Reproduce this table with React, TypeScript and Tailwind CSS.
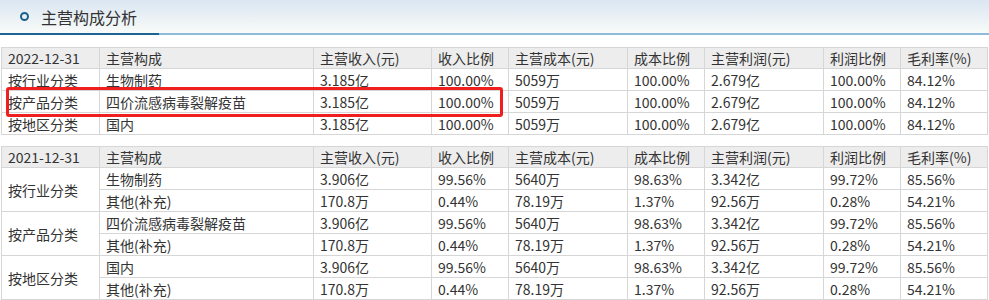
const COLS = [98, 214, 118, 77, 119, 77, 119, 77, 87];

const HEAD = [
  "主营构成",
  "主营收入(元)",
  "收入比例",
  "主营成本(元)",
  "成本比例",
  "主营利润(元)",
  "利润比例",
  "毛利率(%)",
];

type Group = { label: string; rows: string[][] };

const Y2022: Group[] = [
  { label: "按行业分类", rows: [["生物制药", "3.185亿", "100.00%", "5059万", "100.00%", "2.679亿", "100.00%", "84.12%"]] },
  { label: "按产品分类", rows: [["四价流感病毒裂解疫苗", "3.185亿", "100.00%", "5059万", "100.00%", "2.679亿", "100.00%", "84.12%"]] },
  { label: "按地区分类", rows: [["国内", "3.185亿", "100.00%", "5059万", "100.00%", "2.679亿", "100.00%", "84.12%"]] },
];

const OTHER = ["其他(补充)", "170.8万", "0.44%", "78.19万", "1.37%", "92.56万", "0.28%", "54.21%"];

const Y2021: Group[] = [
  { label: "按行业分类", rows: [["生物制药", "3.906亿", "99.56%", "5640万", "98.63%", "3.342亿", "99.72%", "85.56%"], OTHER] },
  { label: "按产品分类", rows: [["四价流感病毒裂解疫苗", "3.906亿", "99.56%", "5640万", "98.63%", "3.342亿", "99.72%", "85.56%"], OTHER] },
  { label: "按地区分类", rows: [["国内", "3.906亿", "99.56%", "5640万", "98.63%", "3.342亿", "99.72%", "85.56%"], OTHER] },
];

const cell = "border border-[#d6d6d6] px-[6px] py-0 text-left align-middle whitespace-nowrap";

function DataTable({ date, groups }: { date: string; groups: Group[] }) {
  return (
    <table className="table-fixed border-collapse w-[986px] text-[14px] leading-[18px] text-[#333]">
      <colgroup>
        {COLS.map((w, i) => (
          <col key={i} style={{ width: w }} />
        ))}
      </colgroup>
      <thead>
        <tr className="bg-[#ededed]">
          <th className={`${cell} h-[21px] font-normal`}>{date}</th>
          {HEAD.map((h) => (
            <th key={h} className={`${cell} h-[21px] font-normal`}>
              {h}
            </th>
          ))}
        </tr>
      </thead>
      <tbody>
        {groups.map((g) =>
          g.rows.map((r, i) => (
            <tr key={g.label + i}>
              {i === 0 && (
                <td rowSpan={g.rows.length} className={`${cell} h-[22px]`}>
                  {g.label}
                </td>
              )}
              {r.map((v, j) => (
                <td key={j} className={`${cell} h-[22px]`}>
                  {v}
                </td>
              ))}
            </tr>
          ))
        )}
      </tbody>
    </table>
  );
}

export default function App() {
  return (
    <div
      className="w-[989px] h-[300px] overflow-hidden bg-white"
      style={{ fontFamily: '"Noto Sans CJK SC", "Liberation Sans", sans-serif' }}
    >
      <div className="h-[33px] bg-gradient-to-b from-[#dbe6f2] to-[#f8fbf8] flex items-center pl-[20px] gap-[12px]">
        <span className="w-[9px] h-[9px] rounded-full border-2 border-[#1e5f8c]" />
        <span className="text-[16px] text-[#333] leading-none">主营构成分析</span>
      </div>
      <div className="flex h-[2px]">
        <div className="w-[159px] bg-[#1d6494]" />
        <div className="flex-1 bg-[#8dbbd9]" />
      </div>

      <div className="relative mt-[12px] ml-[1px]">
        <DataTable date="2022-12-31" groups={Y2022} />
        <div className="absolute left-[5px] top-[40px] w-[497px] h-[30px] border-[3px] border-[#f01f1f] rounded-[3px]" />
      </div>

      <div className="mt-[11px] ml-[1px]">
        <DataTable date="2021-12-31" groups={Y2021} />
      </div>
    </div>
  );
}
